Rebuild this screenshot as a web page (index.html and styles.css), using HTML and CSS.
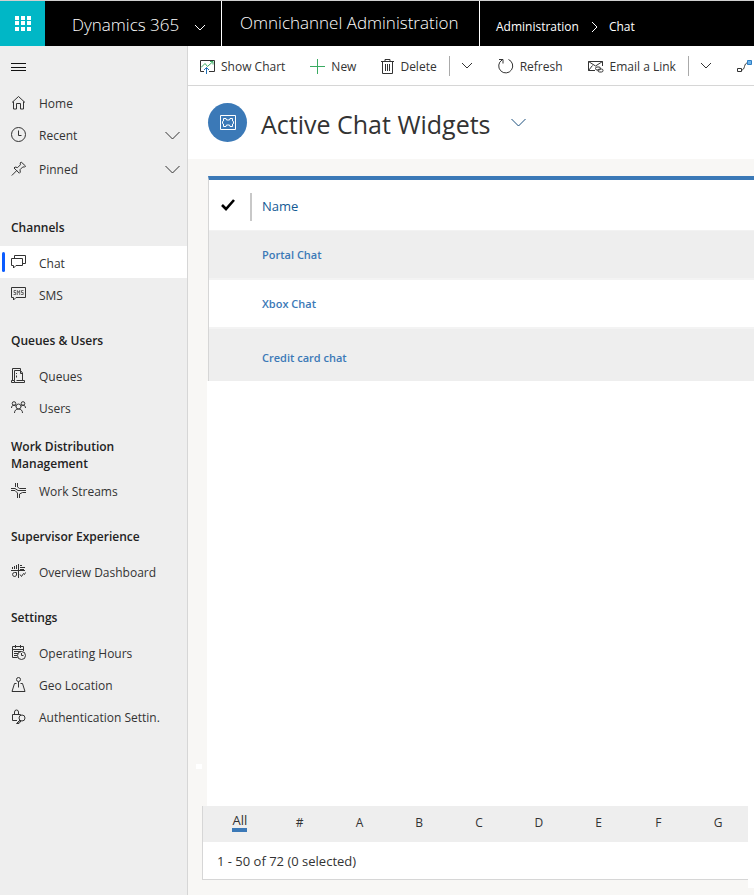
FILE: index.html
```html
<!DOCTYPE html>
<html lang="en">
<head>
<meta charset="utf-8">
<meta name="viewport" content="width=device-width, initial-scale=1">
<title>Omnichannel Administration</title>
<link rel="stylesheet" href="styles.css">
</head>
<body>
<header class="topbar">
  <button class="waffle" type="button" aria-label="App launcher">
    <svg width="16" height="15" viewBox="0 0 16 15" fill="#fff"><path d="M0 0h4v4H0zM6 0h4v4H6zM12 0h4v4h-4zM0 5h4v4H0zM6 5h4v4H6zM12 5h4v4h-4zM0 11h4v4H0zM6 11h4v4H6zM12 11h4v4h-4z"/></svg>
  </button>
  <button class="brand" type="button">Dynamics 365
    <svg width="12" height="8" viewBox="0 0 12 8" class="line"><path d="M1 1l5 5 5-5"/></svg>
  </button>
  <a class="app-name" href="#">Omnichannel Administration</a>
  <nav class="crumbs" aria-label="Breadcrumb">
    <a href="#">Administration</a>
    <svg width="8" height="12" viewBox="0 0 8 12" class="line"><path d="M2 1l5 5-5 5"/></svg>
    <a href="#">Chat</a>
  </nav>
</header>

<div class="shell">
  <nav class="sidebar" aria-label="Site map">
    <button class="menu" type="button" aria-label="Toggle menu">
      <svg width="15" height="10" viewBox="0 0 15 10" class="line"><path d="M0 1.5h15M0 5.5h15M0 8.500h15"/></svg>
    </button>
    <ul class="items">
      <li><a class="item" href="#"><svg class="icon line" viewBox="0 0 16 16"><path d="M1 7.5l6.500-6 6.500 6M2.500 6.500v7.500h3V8.500h4V14h3V6.500"/></svg>Home</a></li>
      <li><button class="item tall" type="button"><svg class="icon line" viewBox="0 0 16 16"><circle cx="7.500" cy="7.500" r="7"/><path d="M7.500 3.500v5h3"/></svg>Recent<svg class="more line" viewBox="0 0 15 9"><path d="M.5 1l7 7 7-7"/></svg></button></li>
      <li><button class="item tall" type="button"><svg class="icon line" viewBox="0 0 16 16"><path d="M.8 14.500l5-5M3 7L8.300 12.200l1-1-.3-2.500 2.800-2.800 1.800.2 1-1L10.200 1l-1 1 .2 1.800-2.800 2.800L4 6z"/></svg>Pinned<svg class="more line" viewBox="0 0 15 9"><path d="M.5 1l7 7 7-7"/></svg></button></li>
    </ul>

    <section class="group first">
      <h2>Channels</h2>
      <ul class="items">
        <li><a class="item current" href="#" aria-current="page"><svg class="icon line" viewBox="0 0 16 16"><path d="M3.500 3.500v-3h11v8h-3M.5 3.500h11v7H5L2.500 13v-2.500h-2z"/></svg>Chat</a></li>
        <li><a class="item" href="#"><svg class="icon line" viewBox="0 0 16 16"><path d="M.5 .5h14v10H5L2.500 13v-2.500h-2z"/><path class="thin" d="M5 3.500H3v2h1.700v2H2.500M6.300 8V3.500l1.200 2 1.200-2V8M12.500 3.500h-2v2h1.700v2H10"/></svg>SMS</a></li>
      </ul>
    </section>

    <section class="group">
      <h2>Queues &amp; Users</h2>
      <ul class="items">
        <li><a class="item" href="#"><svg class="icon line" viewBox="0 0 16 16"><path d="M1.500 12.500V.5h8v2M3.500 12.500v-10h6l2 2.500v7.500M9.500 2.500v3h2M.5 12.500h3v2h-3zM3.500 14.500h10v-2h-8M5.500 5v1M5.500 7.500v2"/></svg>Queues</a></li>
        <li><a class="item" href="#"><svg class="icon line" viewBox="0 0 16 16"><circle cx="3" cy="3.500" r="1.800"/><circle cx="12" cy="3.500" r="1.800"/><circle cx="7.500" cy="6.500" r="2.500"/><path d="M.5 8c0-2 1-2.700 2.500-2.700s1.700.5 2 1.200M14.500 8c0-2-1-2.700-2.500-2.700s-1.700.5-2 1.200M3.500 13c0-2.500 1.500-4 4-4s4 1.500 4 4"/></svg>Users</a></li>
      </ul>
    </section>

    <section class="group tight">
      <h2>Work Distribution Management</h2>
      <ul class="items">
        <li><a class="item" href="#"><svg class="icon line" viewBox="0 0 16 16"><path d="M4.500 0v4M6.500 0v4l2 1.500H15M0 5.500h4l3 2h8M0 7.500h4l2.500 2.500v5M8.500 15v-4l3-1.500H15"/></svg>Work Streams</a></li>
      </ul>
    </section>

    <section class="group">
      <h2>Supervisor Experience</h2>
      <ul class="items">
        <li><a class="item" href="#"><svg class="icon line" viewBox="0 0 16 16"><path d="M7.500 0v14M0 6.500h14M1.500 3v2M3.500 2v3M5.500 1v4M9 1.500h2M9 3.500h5M9 5.500h4M5.500 8.500H3.500a2 2 0 1 0 2 2.500zM9 10.500l1.500 2 2-3 1 1 1-2"/></svg>Overview Dashboard</a></li>
      </ul>
    </section>

    <section class="group">
      <h2>Settings</h2>
      <ul class="items">
        <li><a class="item" href="#"><svg class="icon line" viewBox="0 0 16 16"><path d="M6.500 12.500H1.500v-11h11V6M1.500 4.500h11M4.500 0v3M9.500 0v3M3 6.500h7M3 8.500h4M3 10.500h3"/><circle cx="10.500" cy="10.500" r="4"/><path d="M10.500 8v2.500h2"/></svg>Operating Hours</a></li>
        <li><a class="item" href="#"><svg class="icon line" viewBox="0 0 16 16"><circle cx="7.500" cy="2.500" r="2"/><path d="M7.500 4.500v6M5.500 6.500H3.500L1 14.500h13l-2.500-8h-2"/></svg>Geo Location</a></li>
        <li><a class="item" href="#"><svg class="icon line" viewBox="0 0 16 16"><path d="M6 11.500H1.500v-6h8V6M3.500 5.500V3a2 2 0 0 1 4 0v2.500"/><circle cx="11" cy="9" r="3"/><path d="M9 11L5.500 14.500H8v-1.500h1.500v-1.500"/></svg>Authentication Settin.</a></li>
      </ul>
    </section>
  </nav>

  <main class="main">
    <div class="commands">
      <button class="cmd" type="button"><svg width="15" height="15" viewBox="0 0 15 15" class="line"><path d="M4 12.500H.5v-11h14v11H9"/><path class="green" d="M1 8.500l4-4 2.500 3L13 2.500M10 2.500h3v3"/><path class="blue" d="M6.500 15V8.500M4 11l2.500-2.500L9 11"/></svg>Show Chart</button>
      <button class="cmd" type="button"><svg width="15" height="15" viewBox="0 0 15 15" class="line"><path class="green" d="M7.500 0v15M0 7.500h15"/></svg>New</button>
      <button class="cmd" type="button"><svg width="13" height="15" viewBox="0 0 13 15" class="line"><path d="M0 2.500h13M4 2.500V.5h5v2M1.500 2.500v12h10v-12M4.500 5v7M6.500 5v7M8.500 5v7"/></svg>Delete</button>
      <button class="split" type="button" aria-label="More delete options"><svg width="12" height="8" viewBox="0 0 12 8" class="line"><path d="M1 1l5 5 5-5"/></svg></button>
      <button class="cmd" type="button"><svg width="16" height="16" viewBox="0 0 16 16" class="line"><path d="M10.500 1.500a7 7 0 1 1-6.500.5M1 1.500h4v4"/></svg>Refresh</button>
      <button class="cmd" type="button"><svg width="16" height="13" viewBox="0 0 16 13" class="line"><path d="M7 10.500H.5V1.500h14V6M.5 1.500l7 4.500 7-4.500M.5 10.500l4-5"/><rect x="7.500" y="7" width="5" height="3" rx="1.500"/><rect x="10" y="9" width="5" height="3" rx="1.500"/></svg>Email a Link</button>
      <button class="split" type="button" aria-label="More email options"><svg width="12" height="8" viewBox="0 0 12 8" class="line"><path d="M1 1l5 5 5-5"/></svg></button>
      <button class="cmd" type="button" aria-label="Flow"><svg width="15" height="13" viewBox="0 0 15 13" class="line"><path d="M.5 8.500h4v3h-4zM4.500 10c4 0 2-7 6-7"/><path class="flow-end" d="M10.500.5h4v4h-4z"/></svg></button>
    </div>

    <div class="heading">
      <span class="entity"><svg width="16" height="15" viewBox="0 0 16 15" class="line"><path d="M.5.5h15v14H.5zM3.500 3.500h2.500l.5 1.500h3l.5-1.500h2.500v2.500l1 .5v2l-1 .5v2.500H10L9.500 10h-3L6 11.500H3.500V9l-1-.5v-2l1-.5z"/></svg></span>
      <h1>Active Chat Widgets</h1>
      <button class="view" type="button" aria-label="Select a view"><svg width="15" height="9" viewBox="0 0 15 9" class="line"><path d="M.5 1l7 7 7-7"/></svg></button>
    </div>

    <div class="content">
      <div class="list">
        <table class="grid">
          <thead>
            <tr><th class="check" scope="col"><button type="button" aria-label="Select all"><svg width="14" height="12" viewBox="0 0 14 12"><path d="M1 6l4 4 8-9" fill="none" stroke="#000" stroke-width="2.600"/></svg></button></th><th class="name" scope="col">Name</th></tr>
          </thead>
          <tbody>
            <tr><td></td><td><a href="#">Portal Chat</a></td></tr>
            <tr><td></td><td><a href="#">Xbox Chat</a></td></tr>
            <tr><td></td><td><a href="#">Credit card chat</a></td></tr>
          </tbody>
        </table>
      </div>
      <div class="pager-area">
        <div class="pager">
          <nav class="letters" aria-label="Jump to letter">
            <a class="active" href="#">All</a><a href="#">#</a><a href="#">A</a><a href="#">B</a><a href="#">C</a><a href="#">D</a><a href="#">E</a><a href="#">F</a><a href="#">G</a>
          </nav>
          <p class="status">1 - 50 of 72 (0 selected)</p>
        </div>
      </div>
    </div>
  </main>
</div>
</body>
</html>
```
FILE: styles.css
```css
* { box-sizing: border-box; }

body {
  margin: 0;
  min-height: 100vh;
  display: flex;
  flex-direction: column;
  font-family: "Open Sans", "Noto Sans", sans-serif;
  font-size: 12px;
  line-height: 17px;
  color: #333;
  background: #fff;
  overflow-x: hidden;
}

a { color: inherit; text-decoration: none; }

button {
  font: inherit;
  color: inherit;
  background: none;
  border: 0;
  padding: 0;
  cursor: pointer;
}

h1, h2, p, ul { margin: 0; padding: 0; }
ul { list-style: none; }
svg { flex: none; display: block; }
.line { fill: none; stroke: currentColor; stroke-width: 1; }
.thin { stroke-width: .7; }
.green { stroke: #3aab62; }
.blue { stroke: #1f6fb5; }
.flow-end { stroke: #2f7fc4; fill: #6db3ea; }

/* Top bar */
.topbar {
  display: flex;
  height: 46px;
  border-top: 1px solid #d0d0d0;
  background: #000;
  color: #fff;
  white-space: nowrap;
}

.waffle {
  width: 45px;
  display: grid;
  place-items: center;
  background: #00b7c6;
}

.brand {
  display: flex;
  align-items: center;
  gap: 15px;
  width: 176px;
  padding: 2px 0 0 27px;
  font-size: 17px;
  font-weight: 300;
}
.brand svg { margin-top: 6px; }

.app-name {
  display: flex;
  align-items: center;
  width: 259px;
  padding: 0 0 2px 18px;
  border: solid #fff;
  border-width: 0 1px;
  font-size: 17px;
  font-weight: 300;
}

.crumbs {
  display: flex;
  align-items: center;
  gap: 11px;
  padding: 6px 0 0 16px;
}

/* Shell */
.shell { flex: 1; display: flex; }

.sidebar {
  flex: none;
  width: 188px;
  border-right: 1px solid #d6d6d6;
  background: #eee;
}

.menu {
  display: flex;
  align-items: center;
  height: 41px;
  padding-left: 11px;
  color: #111;
}

.item {
  position: relative;
  display: flex;
  align-items: center;
  gap: 12px;
  width: 100%;
  height: 32px;
  padding: 0 7px 0 11px;
  white-space: nowrap;
}
.tall { height: 34px; padding-bottom: 2px; }
.group .item { padding-top: 2px; }
.icon { width: 16px; height: 16px; }
.more { width: 15px; height: 9px; margin-left: auto; }

.current { background: #fff; }
.current::before {
  content: "";
  position: absolute;
  left: 2px;
  top: 6px;
  bottom: 6px;
  width: 3px;
  border-radius: 2px;
  background: #0b5cff;
}

.group { padding-top: 22px; }
.group h2 {
  padding: 0 40px 10px 11px;
  font-size: 12px;
  font-weight: 600;
  line-height: 17px;
  color: #222;
}
.first { padding-top: 32px; }
.tight { padding-top: 15px; }
.tight h2 { padding-bottom: 2px; }

/* Main column */
.main {
  flex: 1;
  min-width: 0;
  display: flex;
  flex-direction: column;
}

.commands {
  display: flex;
  align-items: center;
  gap: 25px;
  height: 40px;
  padding: 1px 0 0 12px;
  border-bottom: 1px solid #d6d6d6;
  white-space: nowrap;
  overflow: hidden;
}
.cmd { display: flex; align-items: center; gap: 6px; }
.split {
  display: flex;
  align-items: center;
  height: 20px;
  margin-left: -13px;
  padding-left: 11px;
  border-left: 1px solid #aaa;
}

.heading {
  display: flex;
  align-items: center;
  height: 73px;
  padding-left: 20px;
}
.entity {
  display: grid;
  place-items: center;
  width: 39px;
  height: 39px;
  border-radius: 50%;
  background: #3b79b7;
  color: #fff;
}
.heading h1 {
  margin-left: 14px;
  padding-top: 2px;
  font-size: 25px;
  font-weight: 400;
  line-height: 34px;
}
.view { margin-left: 20px; color: #1b4f7d; }

.content {
  flex: 1;
  display: flex;
  flex-direction: column;
  padding: 17px 0 7px;
  background: #f8f7f5;
}
.list {
  position: relative;
  flex: 1;
  margin-left: 19px;
  background: linear-gradient(#f8f7f5, #f8f7f5) 0 0 / 1px 205px no-repeat #fff;
}
.list::before {
  content: "";
  position: absolute;
  left: -11px;
  bottom: 37px;
  width: 6px;
  height: 5px;
  background: #fff;
}

.grid {
  width: calc(100% - 1px);
  margin-left: 1px;
  border-collapse: separate;
  border-spacing: 0;
  border-top: 4px solid #3b79b7;
  border-left: 1px solid #d6d6d6;
  text-align: left;
}
.grid th { height: 51px; padding: 4px 0 0; border-bottom: 1px solid #f2f2f2; }
.grid .check { width: 43px; }
.check button {
  display: flex;
  align-items: center;
  width: 43px;
  height: 28px;
  padding: 0 0 4px 12px;
  border-right: 2px solid #c8c8c8;
}
.grid .name {
  padding: 2px 0 0 10px;
  font-size: 13px;
  font-weight: 400;
  color: #145a94;
}
.grid td {
  height: 49px;
  padding: 0;
  border-bottom: 2px solid #f3f3f3;
  font-size: 11px;
  font-weight: 600;
  color: #3b79b7;
}
.grid td + td { padding-left: 10px; }
.grid tbody tr:nth-child(odd) { background: #eee; }
.grid tbody tr:last-child td { height: 52px; padding-top: 4px; border-bottom: 0; }

.pager-area {
  margin-left: 14px;
  padding-bottom: 8px;
  border-right: 6px solid #fff;
}
.pager {
  border-left: 1px solid #d6d6d6;
  border-bottom: 1px solid #d6d6d6;
  background: #fff;
}
.letters {
  display: grid;
  grid-template-columns: repeat(9, 1fr);
  align-items: center;
  justify-items: center;
  height: 36px;
  padding: 0 0 4px 7px;
  background: #eee;
}
.letters .active {
  font-size: 13px;
  line-height: 16px;
  border-bottom: 4px solid #3b79b7;
}
.status { padding: 11px 14px 9px; font-size: 13px; }
```
